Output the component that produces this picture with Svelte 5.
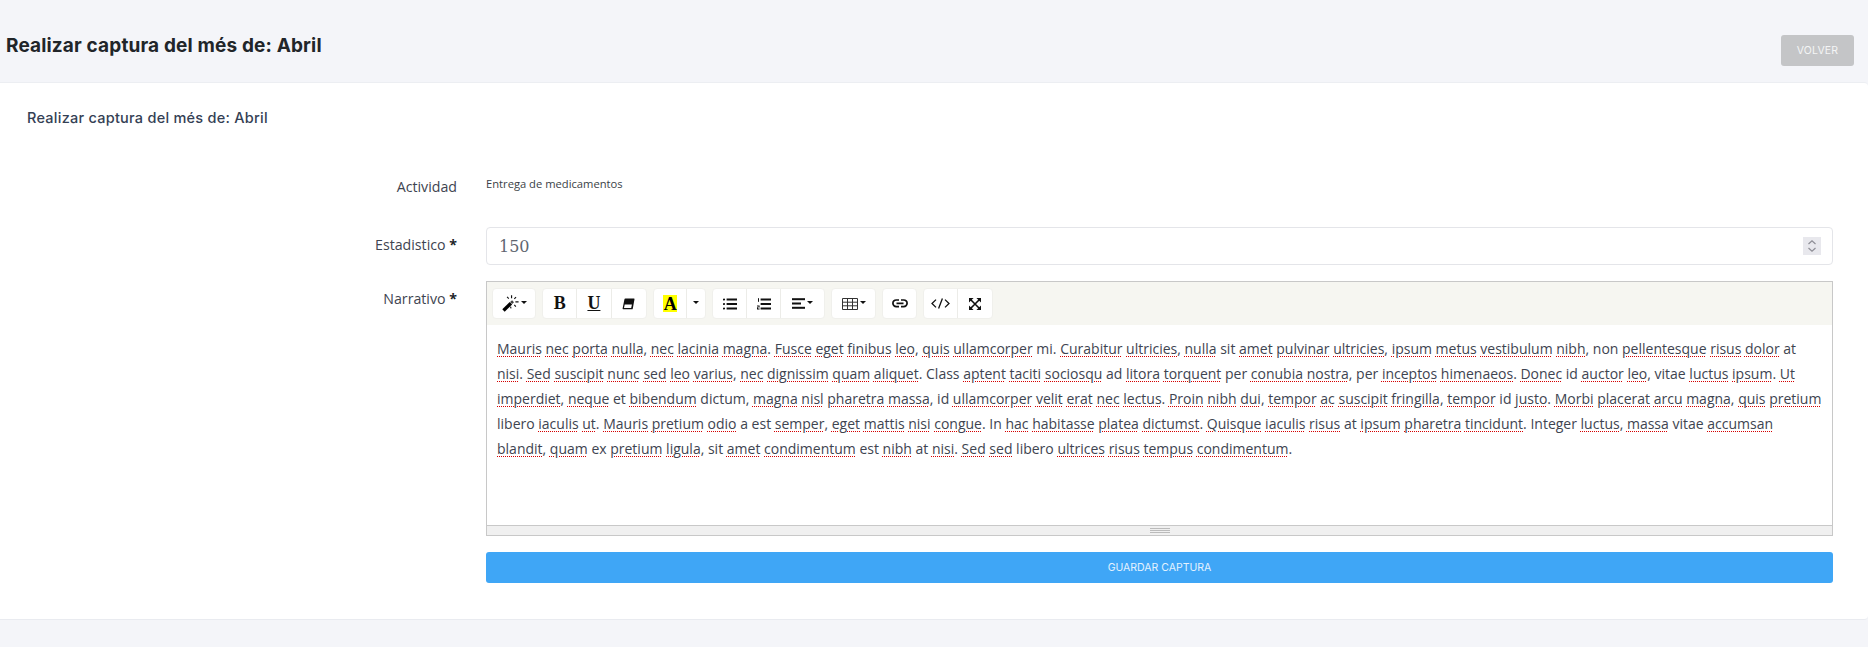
<script lang="ts">
	const narrative =
		'Mauris nec porta nulla, nec lacinia magna. Fusce eget finibus leo, quis ullamcorper mi. Curabitur ultricies, nulla sit amet pulvinar ultricies, ipsum metus vestibulum nibh, non pellentesque risus dolor at nisi. Sed suscipit nunc sed leo varius, nec dignissim quam aliquet. Class aptent taciti sociosqu ad litora torquent per conubia nostra, per inceptos himenaeos. Donec id auctor leo, vitae luctus ipsum. Ut imperdiet, neque et bibendum dictum, magna nisl pharetra massa, id ullamcorper velit erat nec lectus. Proin nibh dui, tempor ac suscipit fringilla, tempor id justo. Morbi placerat arcu magna, quis pretium libero iaculis ut. Mauris pretium odio a est semper, eget mattis nisi congue. In hac habitasse platea dictumst. Quisque iaculis risus at ipsum pharetra tincidunt. Integer luctus, massa vitae accumsan blandit, quam ex pretium ligula, sit amet condimentum est nibh at nisi. Sed sed libero ultrices risus tempus condimentum.';

	// words the spellchecker did not flag
	const known = new Set(['mi', 'sit', 'non', 'at', 'Class', 'ad', 'per', 'id', 'vitae', 'et', 'dictum', 'a', 'est', 'In', 'libero', 'Integer', 'ex']);

	const words = narrative.split(' ').map((w) => {
		const m = w.match(/^(\w+)(\W*)$/);
		const word = m ? m[1] : w;
		return { word, tail: m ? m[2] : '', flagged: !known.has(word) };
	});
</script>

<div class="page">
	<header class="head">
		<h1>Realizar captura del més de: Abril</h1>
		<button class="back" type="button">VOLVER</button>
	</header>

	<section class="card">
		<h2>Realizar captura del més de: Abril</h2>

		<form class="form" onsubmit={(e) => e.preventDefault()}>
			<div class="label first">Actividad</div>
			<div class="static">Entrega de medicamentos</div>

			<label class="label mid" for="stat">Estadistico <b>*</b></label>
			<div class="field">
				<input id="stat" class="number" type="number" value="150" />
				<span class="spin">
					<svg width="10" height="14" viewBox="0 0 10 14">
						<path d="M1.5 5 5 1.8 8.5 5M1.5 9 5 12.2 8.5 9" fill="none" stroke="#8d8d95" stroke-width="1.2" />
					</svg>
				</span>
			</div>

			<div class="label mid">Narrativo <b>*</b></div>
			<div class="editor">
				<div class="toolbar">
					<div class="group">
						<button type="button" class="tb wand" aria-label="Estilo">
							<svg width="17" height="17" viewBox="0 0 16 16">
								<path d="M1.4 14.6 8.4 7.8" stroke="#000" stroke-width="3.2" fill="none" />
								<path d="M8.6 7.6 10.4 5.8" stroke="#444" stroke-width="2.6" fill="none" />
								<path d="M9 .2v2.8M13.2 2 11.6 3.6M4.8 1.8l1.6 1.6M12.6 6.4h3M11.6 9.4l1.4 1.6M8 11l.5 1.6" stroke="#111" stroke-width="1.1" fill="none" />
							</svg>
							<i class="caret"></i>
						</button>
					</div>
					<div class="group">
						<button type="button" class="tb glyph">B</button>
						<button type="button" class="tb glyph under">U</button>
						<button type="button" class="tb" aria-label="Borrar formato">
							<svg width="13" height="12" viewBox="0 0 13 12">
								<path d="M3.4.6H12a.5.5 0 0 1 .5.6L10.8 10.4a1 1 0 0 1-1 .9H1.2a.6.6 0 0 1-.6-.7L2.4 1.5a1 1 0 0 1 1-.9z" fill="#111" />
								<path d="M2.7 6.4H9.9L9.2 9.9H2z" fill="#fff" />
							</svg>
						</button>
					</div>
					<div class="group">
						<button type="button" class="tb glyph color"><span class="mark">A</span></button>
						<button type="button" class="tb small" aria-label="Color"><i class="caret"></i></button>
					</div>
					<div class="group">
						<button type="button" class="tb" aria-label="Lista">
							<svg width="14" height="12" viewBox="0 0 14 12">
								<g fill="#111">
									<circle cx="1" cy="1.5" r="1.1" />
									<circle cx="1" cy="6" r="1.1" />
									<circle cx="1" cy="10.5" r="1.1" />
									<rect x="3.6" y=".5" width="10.4" height="2" />
									<rect x="3.6" y="5" width="10.4" height="2" />
									<rect x="3.6" y="9.5" width="10.4" height="2" />
								</g>
							</svg>
						</button>
						<button type="button" class="tb" aria-label="Lista numerada">
							<svg width="14" height="12" viewBox="0 0 14 12">
								<g fill="#111">
									<rect x="1" y=".2" width="1" height="3.6" />
									<path d="M0 7.4h2.6v2H1v1h1.6v1H0v-2.2h1.6v-.8H0z" />
									<rect x="3.6" y=".5" width="10.4" height="2" />
									<rect x="3.6" y="5" width="10.4" height="2" />
									<rect x="3.6" y="9.5" width="10.4" height="2" />
								</g>
							</svg>
						</button>
						<button type="button" class="tb wide" aria-label="Alinear">
							<svg width="13" height="11" viewBox="0 0 13 11">
								<g fill="#111">
									<rect y=".2" width="13" height="2" />
									<rect y="4.5" width="9" height="2" />
									<rect y="8.8" width="13" height="2" />
								</g>
							</svg>
							<i class="caret"></i>
						</button>
					</div>
					<div class="group">
						<button type="button" class="tb wide" aria-label="Tabla">
							<svg width="16" height="12" viewBox="0 0 16 12">
								<path d="M.5.5h15v11H.5zM.5 4.2h15M.5 7.8h15M5.5.5v11M10.5.5v11" fill="none" stroke="#333" />
							</svg>
							<i class="caret"></i>
						</button>
					</div>
					<div class="group">
						<button type="button" class="tb link" aria-label="Enlace">
							<svg width="16" height="9" viewBox="0 0 16 9">
								<path d="M7 1H4.2a3.3 3.3 0 0 0 0 6.6H7M9 1h2.8a3.3 3.3 0 0 1 0 6.6H9M4.5 4.3h7" fill="none" stroke="#111" stroke-width="1.7" />
							</svg>
						</button>
					</div>
					<div class="group">
						<button type="button" class="tb code" aria-label="Código">
							<svg width="19" height="11" viewBox="0 0 19 11">
								<path d="M5 1.6 1 5.5l4 3.9M14 1.6l4 3.9-4 3.9M11.4.4 7.6 10.6" fill="none" stroke="#111" stroke-width="1.3" />
							</svg>
						</button>
						<button type="button" class="tb code" aria-label="Pantalla completa">
							<svg width="12" height="12" viewBox="0 0 12 12">
								<path d="M1.5 1.5l9 9M10.5 1.5l-9 9" stroke="#111" stroke-width="1.6" fill="none" />
								<path d="M0 0h4.6L0 4.6zM12 0v4.6L7.4 0zM0 12V7.4L4.6 12zM12 12H7.4L12 7.4z" fill="#111" />
							</svg>
						</button>
					</div>
				</div>
				<div class="content" spellcheck="false">
					{#each words as w}
						{#if w.flagged}<span class="typo">{w.word}</span>{:else}{w.word}{/if}{w.tail}{' '}
					{/each}
				</div>
				<div class="status"><span class="grip"></span></div>
			</div>

			<div></div>
			<button class="save" type="submit">GUARDAR CAPTURA</button>
		</form>
	</section>
</div>

<style>
	:global(body) {
		margin: 0;
		background: #f4f5f9;
	}

	.page {
		font-family: 'Open Sans', sans-serif;
		color: #3e4450;
		height: 647px;
		overflow: hidden;
	}

	.head {
		height: 82px;
		display: flex;
		justify-content: space-between;
		padding: 0 14px 0 6px;
	}

	h1 {
		margin: 35px 0 0;
		font-family: Inter, sans-serif;
		font-size: 19px;
		line-height: 22px;
		letter-spacing: 0.15px;
		font-weight: 700;
		color: #212529;
	}

	.back {
		margin-top: 35px;
		width: 73px;
		height: 31px;
		border: 0;
		border-radius: 3px;
		background: #c4c5c7;
		color: #f4f5f6;
		font-family: Inter, sans-serif;
		font-size: 10.5px;
		letter-spacing: 0.2px;
		padding: 0;
	}

	.card {
		background: #fff;
		height: 538px;
		box-sizing: border-box;
		border-top: 1px solid #eceef2;
		border-bottom: 1px solid #e9ebf0;
		border-radius: 0 4px 4px 0;
		padding: 26px 35px 0 27px;
	}

	h2 {
		margin: 0;
		font-family: Inter, sans-serif;
		font-size: 14.5px;
		line-height: 18px;
		letter-spacing: 0.25px;
		font-weight: 500;
		color: #344054;
	}

	.form {
		display: grid;
		grid-template-columns: 430px 1fr;
		column-gap: 29px;
		margin-top: 49px;
	}

	.label {
		text-align: right;
		font-size: 14.2px;
		line-height: 20px;
		color: #3e4450;
	}

	.label b {
		font-weight: 700;
		color: #212529;
	}

	.first {
		height: 50px;
		padding-top: 1px;
	}

	.mid {
		margin-top: 8px;
	}

	.static {
		font-size: 11.2px;
		line-height: 15px;
		color: #3a3f47;
	}

	.field {
		position: relative;
		height: 38px;
		margin-bottom: 16px;
	}

	.number {
		height: 38px;
		box-sizing: border-box;
		width: 100%;
		border: 1px solid #e4e5e9;
		border-radius: 4px;
		padding: 0 11px 0 12px;
		font-family: 'DejaVu Serif', serif;
		font-size: 16px;
		color: #5f6670;
		outline: none;
		appearance: textfield;
	}

	.spin {
		position: absolute;
		right: 12px;
		top: 10px;
		width: 18px;
		height: 18px;
		background: #e8e8ed;
		display: flex;
		align-items: center;
		justify-content: center;
	}

	.editor {
		border: 1px solid #c8c8c8;
		height: 255px;
		box-sizing: border-box;
		display: flex;
		flex-direction: column;
	}

	.toolbar {
		background: #f6f6f1;
		height: 43px;
		box-sizing: border-box;
		flex: none;
		display: flex;
		gap: 6px;
		padding: 6px 0 0 5px;
	}

	.group {
		display: flex;
		height: 31px;
		background: #fff;
		border: 1px solid #f0f0ec;
		border-radius: 4px;
		box-sizing: border-box;
	}

	.tb {
		width: 34.3px;
		height: 100%;
		padding: 0;
		border: 0;
		border-right: 1px solid #ecece8;
		background: transparent;
		display: flex;
		align-items: center;
		justify-content: center;
		gap: 2px;
		color: #111;
	}

	.tb:last-child {
		border-right: 0;
	}

	.wide {
		width: 43px;
	}

	.wand {
		width: 42px;
	}

	.color {
		width: 33.5px;
	}

	.small {
		width: 17.5px;
	}

	.link {
		width: 33px;
	}

	.code {
		width: 34px;
	}

	.glyph {
		font-family: 'Liberation Serif', serif;
		font-weight: 700;
		font-size: 18px;
	}

	.under {
		text-decoration: underline;
	}

	.mark {
		display: block;
		width: 14px;
		height: 17px;
		line-height: 18px;
		text-align: center;
		background: #ff0;
		color: #000;
	}

	.caret {
		width: 0;
		height: 0;
		border-left: 3.5px solid transparent;
		border-right: 3.5px solid transparent;
		border-top: 3.5px solid #111;
		margin-top: -3px;
	}

	.content {
		flex: 1;
		padding: 11px 8px 0 10px;
		font-size: 14px;
		line-height: 25px;
		color: #3e4450;
	}

	.typo {
		text-decoration: underline dotted #d40000;
		text-decoration-thickness: 1px;
		text-underline-offset: 2px;
	}

	.status {
		flex: none;
		height: 9px;
		background: #f0f0f0;
		border-top: 1px solid #c8c8c8;
		display: flex;
		justify-content: center;
		align-items: center;
	}

	.grip {
		width: 20px;
		height: 5px;
		box-sizing: border-box;
		border-top: 1px solid #bbb;
		border-bottom: 1px solid #bbb;
		background: linear-gradient(#bbb, #bbb) center / 100% 1px no-repeat;
	}

	.save {
		margin-top: 16px;
		height: 31px;
		border: 0;
		border-radius: 3px;
		background: #3fa6f6;
		color: #e4f2fe;
		font-family: Inter, sans-serif;
		font-size: 10.5px;
		padding: 0;
	}
</style>
